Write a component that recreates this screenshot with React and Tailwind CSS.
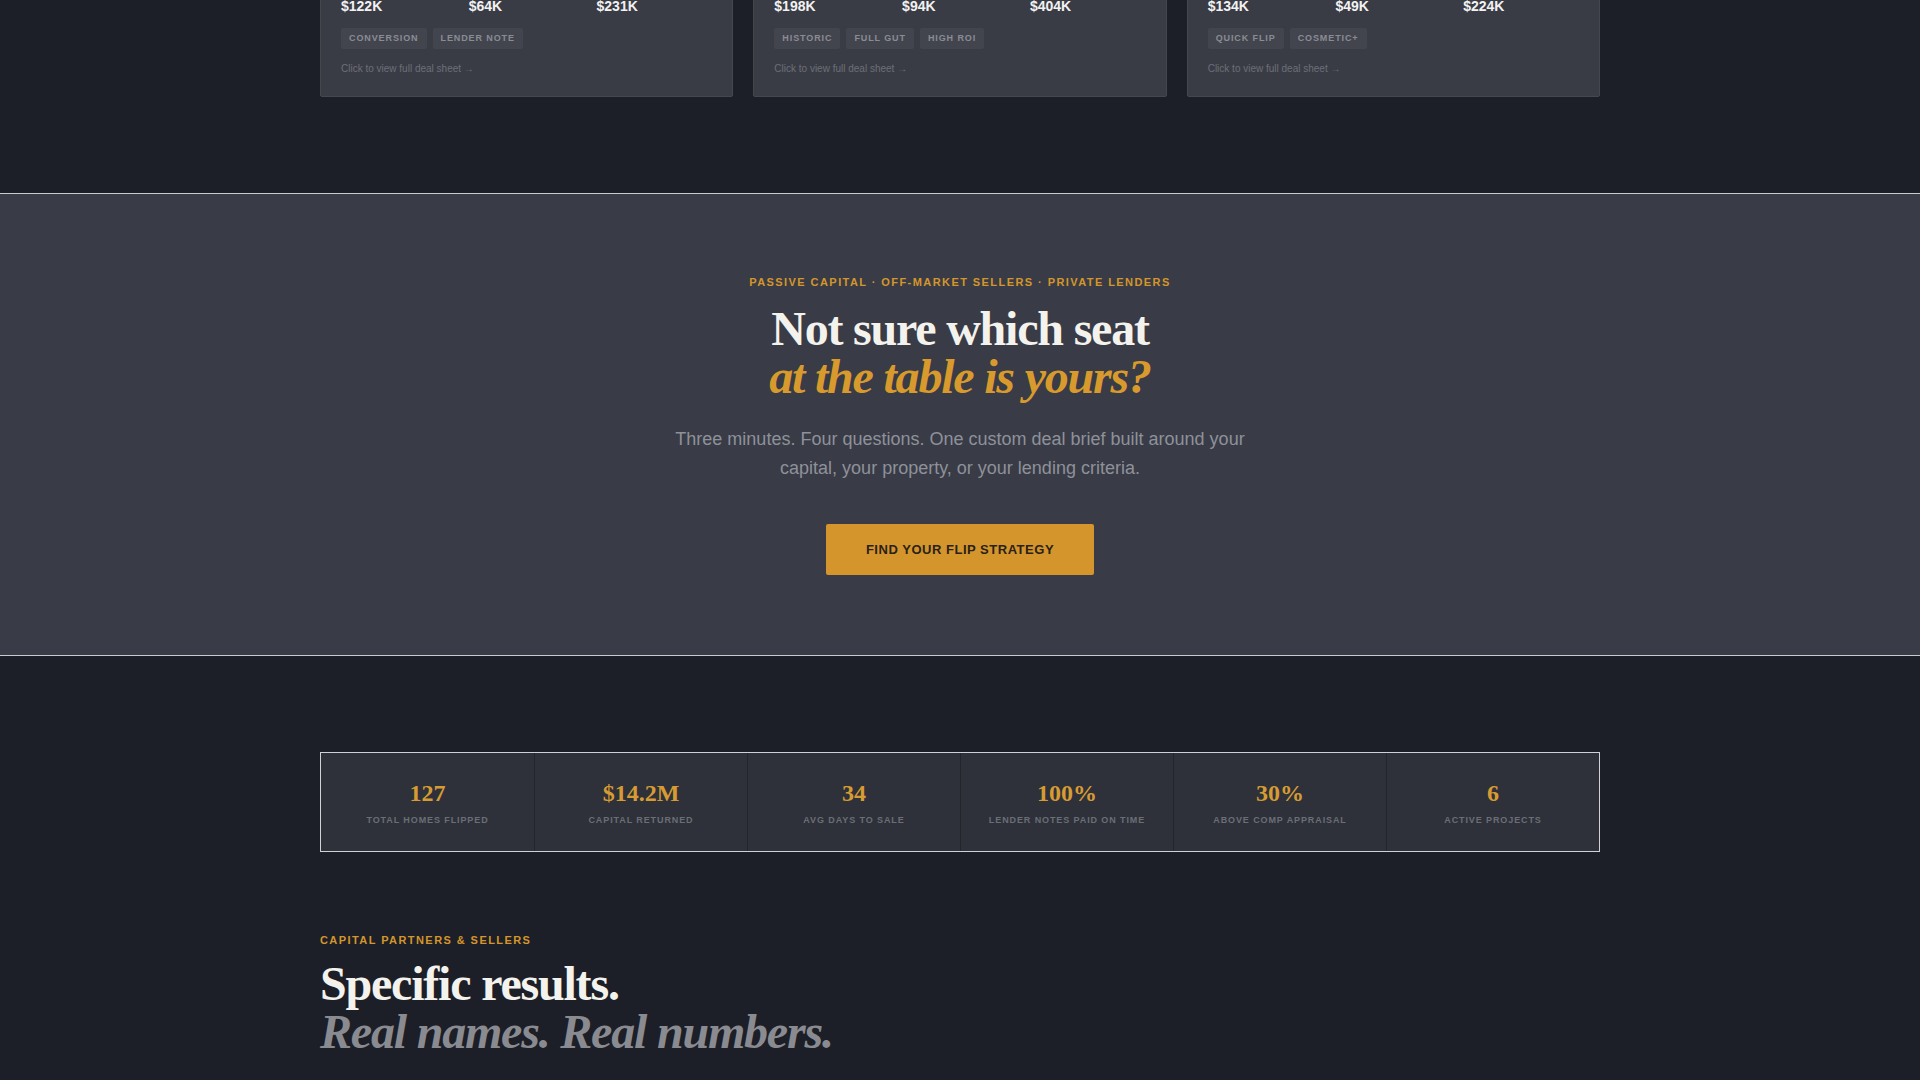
import React from 'react';

const deals = [
  { values: ['$122K', '$64K', '$231K'], tags: ['Conversion', 'Lender Note'] },
  { values: ['$198K', '$94K', '$404K'], tags: ['Historic', 'Full Gut', 'High ROI'] },
  { values: ['$134K', '$49K', '$224K'], tags: ['Quick Flip', 'Cosmetic+'] },
];

const stats = [
  { value: '127', label: 'Total Homes Flipped' },
  { value: '$14.2M', label: 'Capital Returned' },
  { value: '34', label: 'Avg Days to Sale' },
  { value: '100%', label: 'Lender Notes Paid on Time' },
  { value: '30%', label: 'Above Comp Appraisal' },
  { value: '6', label: 'Active Projects' },
];

const DealCard = ({ deal }) => (
  <div className="bg-[#3a3c45] border border-[#45474f] rounded-[2px] p-5 cursor-pointer">
    <div className="grid grid-cols-3 gap-x-3 mb-1 text-[9px] leading-[14px] font-bold uppercase tracking-[0.1em] text-[#7d8089]">
      <span>Buy</span>
      <span>Rehab</span>
      <span>Sold</span>
    </div>
    <div className="grid grid-cols-3 gap-x-3 text-[14px] leading-5 font-bold text-[#f2f2f2]">
      {deal.values.map((v) => (
        <span key={v}>{v}</span>
      ))}
    </div>
    <div className="mt-3 flex gap-1.5">
      {deal.tags.map((t) => (
        <span
          key={t}
          className="bg-[#43454e] px-2 py-1 text-[9px] leading-[13px] font-bold uppercase tracking-[0.1em] text-[#8a8c95] rounded-[2px]"
        >
          {t}
        </span>
      ))}
    </div>
    <p className="mt-3 text-[10px] leading-[15px] text-[#6c6f78]">Click to view full deal sheet →</p>
  </div>
);

export default function App() {
  return (
    <div className="min-h-screen overflow-hidden bg-[#1c1f27] font-['Liberation_Sans',Arial,sans-serif]">
      {/* recent deals grid */}
      <section className="-mt-[43px] pb-24">
        <div className="mx-auto grid max-w-[1280px] grid-cols-3 gap-5">
          {deals.map((d, i) => (
            <DealCard key={i} deal={d} />
          ))}
        </div>
      </section>

      {/* quiz call to action */}
      <section className="border-y border-[#c9cbd0] bg-[#393c46] pt-20 pb-20 text-center">
        <p className="text-[11px] leading-4 font-bold uppercase tracking-[0.13em] text-[#d4962c]">
          Passive Capital · Off-Market Sellers · Private Lenders
        </p>
        <h2 className="mt-[15px] font-['Liberation_Serif','Times_New_Roman',serif] text-5xl leading-[48px] font-bold tracking-tight">
          <span className="block text-[#f4f2ed]">Not sure which seat</span>
          <span className="block italic text-[#d89a2c]">at the table is yours?</span>
        </h2>
        <p className="mx-auto mt-[24px] max-w-xl text-lg leading-relaxed text-[#8e919a]">
          Three minutes. Four questions. One custom deal brief built around your capital, your property, or your lending criteria.
        </p>
        <button className="mt-[40px] rounded-[2px] bg-[#d4962c] px-10 py-4 text-[13px] leading-[19px] font-bold uppercase tracking-[0.04em] text-[#2a2118] hover:bg-[#e0a33a]">
          Find Your Flip Strategy
        </button>
      </section>

      {/* track record + testimonials intro */}
      <section className="mx-auto max-w-[1280px] pt-[96px] pb-24">
        <div className="grid grid-cols-6 border border-[#cfd1d6] bg-[#2e3139]">
          {stats.map((s, i) => (
            <div
              key={s.label}
              className={`pt-6 pb-[24px] text-center ${i > 0 ? 'border-l border-[#22252c]' : ''}`}
            >
              <div className="font-['Liberation_Serif','Times_New_Roman',serif] text-2xl leading-8 font-bold text-[#d69b33]">
                {s.value}
              </div>
              <div className="mt-[4px] text-[9px] leading-[14px] font-bold uppercase tracking-[0.1em] text-[#6b6e77]">
                {s.label}
              </div>
            </div>
          ))}
        </div>

        <p className="mt-20 text-[11px] leading-4 font-bold uppercase tracking-[0.13em] text-[#d4962c]">
          Capital Partners &amp; Sellers
        </p>
        <h2 className="mt-3 font-['Liberation_Serif','Times_New_Roman',serif] text-5xl leading-[48px] font-bold tracking-tight">
          <span className="block text-[#f4f2ed]">Specific results.</span>
          <span className="block italic text-[#8a8b91]">Real names. Real numbers.</span>
        </h2>
      </section>
    </div>
  );
}
